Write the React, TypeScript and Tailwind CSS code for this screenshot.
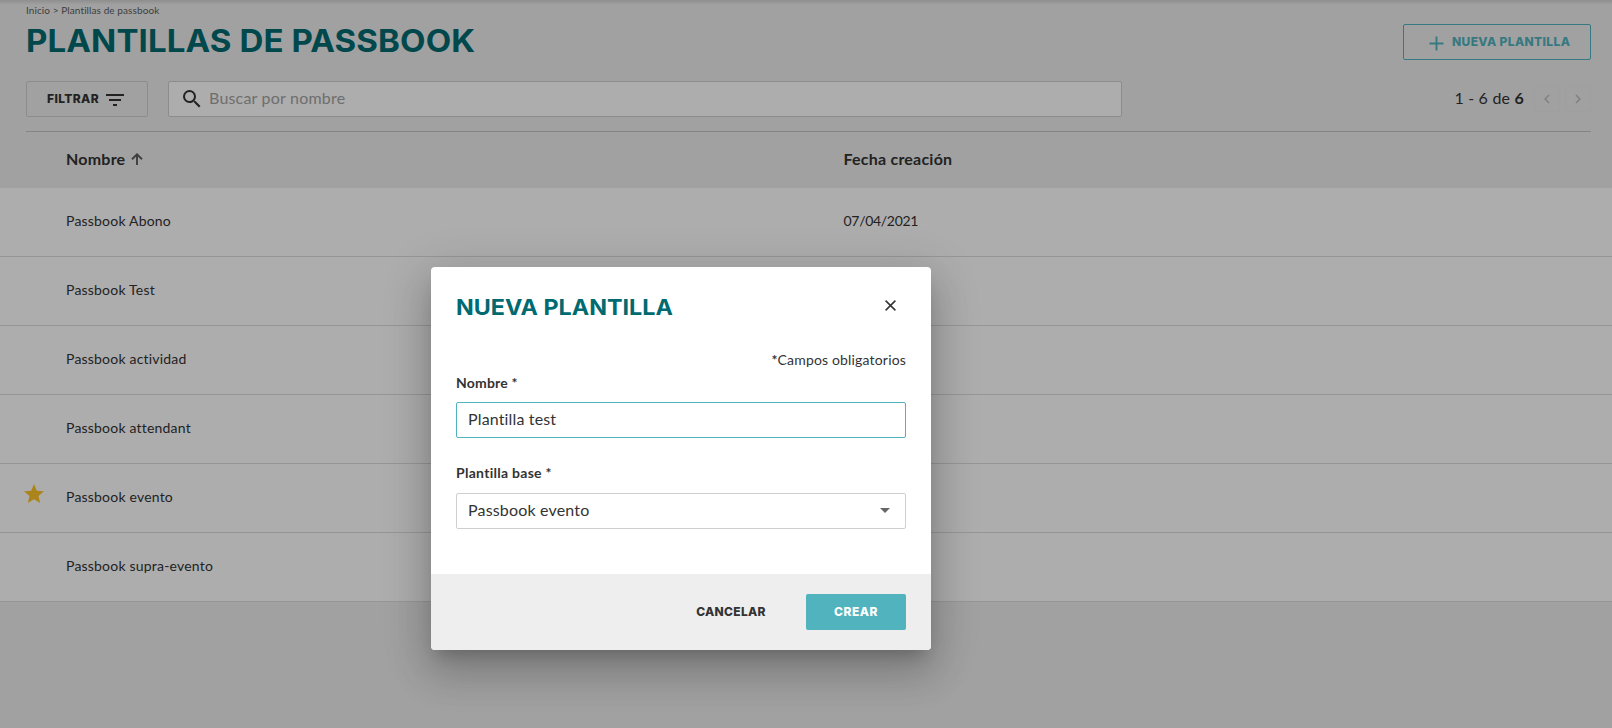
import type { ReactNode } from 'react'
import { MdArrowDropDown, MdChevronLeft, MdChevronRight, MdFilterList, MdSearch, MdStar } from 'react-icons/md'

type Template = {
  name: string
  created?: string
  starred?: boolean
}

const TEMPLATES: Template[] = [
  { name: 'Passbook Abono', created: '07/04/2021' },
  { name: 'Passbook Test' },
  { name: 'Passbook actividad' },
  { name: 'Passbook attendant' },
  { name: 'Passbook evento', starred: true },
  { name: 'Passbook supra-evento' },
]

function PageHeader() {
  return (
    <header className="flex h-[81px] justify-between">
      <div>
        <nav className="mt-[2px] h-4 text-[10px] leading-4 tracking-[0.09px] text-[#5c5c5c]">
          Inicio &gt; Plantillas de passbook
        </nav>
        <h1 className="mt-[4px] origin-left scale-x-[1.066] font-['Inter',sans-serif] text-[31px] leading-[38px] font-bold tracking-[0.1px] text-[#006a71]">
          PLANTILLAS DE PASSBOOK
        </h1>
      </div>
      <button className="mt-6 flex h-9 w-[188px] items-center rounded-xs border border-[#50b3bd] pl-[25px] font-['Inter',sans-serif] text-[12px] font-extrabold tracking-[0.37px] text-[#50b3bd]">
        <svg className="mt-[2px] mr-[8px]" width="15" height="15" viewBox="0 0 15 15" fill="none" stroke="currentColor" strokeWidth="1.9">
          <path d="M7.5 0.5v14M0.5 7.5h14" />
        </svg>
        <span className="whitespace-nowrap">NUEVA PLANTILLA</span>
      </button>
    </header>
  )
}

function PageButton({ children }: { children: ReactNode }) {
  return (
    <button className="flex size-[26px] items-center justify-center rounded-xs border border-[#ebebeb] text-[#bdbdbd]">
      {children}
    </button>
  )
}

function Toolbar() {
  return (
    <div className="flex h-[51px] items-start border-b border-[#c4c4c4]">
      <button className="flex h-9 w-[122px] items-center rounded-xs border border-[#cfcfcf] pl-5 font-['Inter',sans-serif] text-[12px] font-extrabold tracking-[0.37px]">
        <span className="w-[53px] text-left">FILTRAR</span>
        <MdFilterList className="mt-[2px] ml-[3px]" size={24} />
      </button>
      <div className="ml-5 flex h-9 w-[954px] items-center rounded-xs border border-[#cfcfcf] bg-white pl-[11px]">
        <MdSearch size={24} />
        <span className="mb-[2px] ml-[5px] text-[16px] tracking-[0.2px] text-[#a3a3a3]">Buscar por nombre</span>
      </div>
      <div className="mt-[5px] ml-auto flex items-center">
        <span className="mr-[10px] mb-[2px] text-[16px] tracking-[0.2px]">
          1 - 6 de <b>6</b>
        </span>
        <PageButton>
          <MdChevronLeft size={18} />
        </PageButton>
        <span className="w-[5px]" />
        <PageButton>
          <MdChevronRight size={18} />
        </PageButton>
      </div>
    </div>
  )
}

function TemplateTable() {
  return (
    <div>
      <div className="flex h-14 items-center pb-[2px] text-[16px] font-bold tracking-[0.22px]">
        <div className="flex w-[843.5px] items-center pl-[66px]">
          Nombre
          <svg className="ml-[6px] text-[#5c5c5c]" width="12" height="12" viewBox="0 0 12 12" fill="none" stroke="currentColor" strokeWidth="1.9">
            <path d="M6 12V1.5M1 6.2L6 1.3L11 6.2" />
          </svg>
        </div>
        <div>Fecha creación</div>
      </div>
      {TEMPLATES.map((t) => (
        <div key={t.name} className="flex h-[69px] items-center border-b border-[#dedede] bg-white pb-[4px] text-[14px]">
          <div className="flex w-[66px] justify-start pb-[4px] pl-[22px]">
            {t.starred && <MdStar className="text-[#fcc42a]" size={24} />}
          </div>
          <div className="w-[777.5px] tracking-[0.2px]">{t.name}</div>
          <div className="tracking-[-0.3px]">{t.created}</div>
        </div>
      ))}
    </div>
  )
}

function NewTemplateDialog() {
  return (
    <div className="flex h-[383px] w-[500px] flex-col overflow-hidden rounded-[4px] bg-white shadow-[0_11px_15px_-7px_rgba(0,0,0,0.2),0_24px_38px_3px_rgba(0,0,0,0.14),0_9px_46px_8px_rgba(0,0,0,0.12)]">
      <div className="flex h-[80px] items-center justify-between pr-[35px] pl-[25px]">
        <h2 className="origin-left scale-x-[1.06] font-['Inter',sans-serif] text-[22px] font-bold text-[#006a71]">
          NUEVA PLANTILLA
        </h2>
        <svg className="mb-[3px]" width="11" height="11" viewBox="0 0 11 11" fill="none" stroke="currentColor" strokeWidth="1.5">
          <path d="M0.6 0.6l9.8 9.8M10.4 0.6l-9.8 9.8" />
        </svg>
      </div>
      <div className="flex flex-1 flex-col px-[25px] text-[14px]">
        <p className="mt-[2px] h-[22px] text-right leading-[22px] tracking-[0.17px]">
          <b>*</b>Campos obligatorios
        </p>
        <label className="h-[31px] leading-[24px] font-bold tracking-[0.2px]">Nombre *</label>
        <div className="flex h-9 items-center rounded-xs border border-[#50b3bd] pb-[2px] pl-[11px] text-[16px] tracking-[0.15px]">
          Plantilla test
        </div>
        <label className="mt-[22px] h-[33px] leading-[26px] font-bold tracking-[0.28px]">Plantilla base *</label>
        <div className="flex h-9 items-center justify-between rounded-xs border border-[#cfcfcf] pr-[8px] pl-[11px] text-[16px] tracking-[0.17px]">
          <span className="mb-[2px]">Passbook evento</span>
          <MdArrowDropDown className="mb-[2px] text-[#666666]" size={24} />
        </div>
      </div>
      <div className="flex h-[76px] items-center justify-end bg-[#eeeeee] pr-[25px] font-['Inter',sans-serif] text-[12px] font-extrabold tracking-[0.3px]">
        <button className="mr-[40px] w-[70px] whitespace-nowrap">CANCELAR</button>
        <button className="h-9 w-[100px] rounded-xs bg-[#50b3bd] tracking-[0.5px] text-white">CREAR</button>
      </div>
    </div>
  )
}

export default function App() {
  return (
    <div className="relative h-[728px] w-[1612px] overflow-hidden bg-[#eeeeee] font-['Lato','Open_Sans',sans-serif] text-[#333333]">
      <div className="px-[26px] pr-[21px]">
        <PageHeader />
        <Toolbar />
      </div>
      <TemplateTable />
      {/* shadow cast by the app bar above this view */}
      <div className="absolute inset-x-0 top-0 h-[5px] bg-linear-to-b from-black/12 to-transparent" />
      <div className="absolute inset-0 bg-black/32 pt-[267px] pl-[431px]">
        <NewTemplateDialog />
      </div>
    </div>
  )
}
